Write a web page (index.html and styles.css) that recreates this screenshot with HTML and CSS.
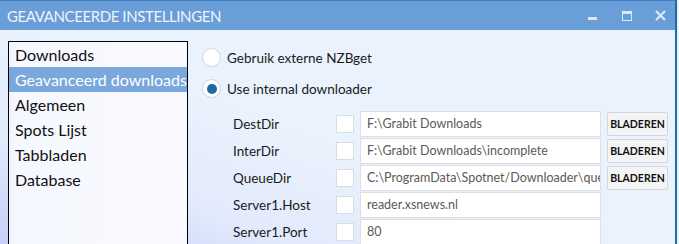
FILE: index.html
```html
<!DOCTYPE html>
<html lang="nl">
<head>
  <meta charset="UTF-8">
  <title>Geavanceerde instellingen</title>
  <link rel="stylesheet" href="styles.css">
</head>
<body>

  <div class="window">
    <div class="titlebar">
      <span class="title">GEAVANCEERDE INSTELLINGEN</span>
      <div class="controls">
        <span class="ctl ctl-min"></span>
        <span class="ctl ctl-max"></span>
        <svg class="ctl-close" width="11" height="11" viewBox="0 0 11 11">
          <path d="M1 1 L10 10 M10 1 L1 10" stroke="#dce8f6" stroke-width="2.2"/>
        </svg>
      </div>
    </div>

    <div class="content">
      <ul class="nav-list">
        <li>Downloads</li>
        <li class="selected">Geavanceerd downloads</li>
        <li>Algemeen</li>
        <li>Spots Lijst</li>
        <li>Tabbladen</li>
        <li>Database</li>
      </ul>

      <div class="settings">
        <label class="radio-row">
          <span class="radio"></span>
          Gebruik externe NZBget
        </label>
        <label class="radio-row">
          <span class="radio checked"></span>
          Use internal downloader
        </label>

        <div class="fields">
          <span class="field-label">DestDir</span>
          <span class="check"></span>
          <div class="field-input">F:\Grabit Downloads</div>
          <button class="browse">BLADEREN</button>

          <span class="field-label">InterDir</span>
          <span class="check"></span>
          <div class="field-input">F:\Grabit Downloads\incomplete</div>
          <button class="browse">BLADEREN</button>

          <span class="field-label">QueueDir</span>
          <span class="check"></span>
          <div class="field-input">C:\ProgramData\Spotnet/Downloader\queue</div>
          <button class="browse">BLADEREN</button>

          <span class="field-label">Server1.Host</span>
          <span class="check"></span>
          <div class="field-input">reader.xsnews.nl</div>
          <span></span>

          <span class="field-label">Server1.Port</span>
          <span class="check"></span>
          <div class="field-input">80</div>
          <span></span>
        </div>
      </div>
    </div>
  </div>

</body>
</html>
```

FILE: styles.css
```css
* {
  margin: 0;
  padding: 0;
  box-sizing: border-box;
  font-family: 'Lato', 'Noto Sans', sans-serif;
}

body {
  width: 679px;
  height: 244px;
  overflow: hidden;
  background: #e9f1fc;
}

.window {
  width: 677px;
  height: 244px;
  overflow: hidden;
  border-right: 2px solid #1d6ca6;
  display: flex;
  flex-direction: column;
  background: linear-gradient(20deg, #c6cff8 0%, #e2eafc 22%, #eaf2fd 45%);
}

/* Title bar */
.titlebar {
  height: 30px;
  flex-shrink: 0;
  background: #699ed8;
  border-top: 1px solid #3f7fc2;
  display: flex;
  align-items: center;
  justify-content: space-between;
  padding-left: 7px;
}

.title {
  color: #eef4fc;
  font-size: 15px;
  letter-spacing: -0.4px;
}

.controls {
  display: flex;
  align-items: center;
  height: 100%;
}

.ctl {
  display: block;
  background: #dce8f6;
}

.ctl-min {
  width: 9px;
  height: 3px;
  margin-top: 6px;
  margin-right: 25px;
}

.ctl-max {
  width: 10px;
  height: 10px;
  background: transparent;
  border: 1px solid #dce8f6;
  border-top-width: 3px;
  margin-right: 23px;
}

.ctl-close {
  display: block;
  margin-right: 9px;
}

/* Content */
.content {
  flex: 1;
  display: flex;
  padding-left: 8px;
  min-height: 0;
}

.nav-list {
  list-style: none;
  width: 180px;
  flex-shrink: 0;
  margin-top: 11px;
  border: 1px solid #000;
  border-bottom: none;
  background: linear-gradient(90deg, #eef1fd 0%, #f6f8ff 3%, #f8faff 100%);
  overflow: hidden;
}

.nav-list li {
  height: 25px;
  line-height: 25px;
  padding-left: 6px;
  font-size: 16px;
  color: #111;
  white-space: nowrap;
}

.nav-list li.selected {
  background: #7aa7dc;
  color: #fff;
}

/* Settings panel */
.settings {
  flex: 1;
  padding: 18px 0 0 14px;
}

.radio-row {
  display: flex;
  align-items: center;
  height: 19px;
  font-size: 13.5px;
  color: #1a1a1a;
  margin-bottom: 12px;
}

.radio {
  width: 19px;
  height: 19px;
  border-radius: 50%;
  border: 1px solid #cfd6de;
  background: #fff;
  margin-right: 6px;
  display: flex;
  align-items: center;
  justify-content: center;
}

.radio.checked::after {
  content: '';
  width: 10px;
  height: 10px;
  border-radius: 50%;
  background: #1b6aa4;
}

.fields {
  display: grid;
  grid-template-columns: 97px 18px 241px 61px;
  column-gap: 6px;
  row-gap: 1px;
  margin-top: 13px;
  margin-left: 31px;
  align-items: center;
}

.field-label {
  font-size: 13.5px;
  color: #1a1a1a;
}

.check {
  width: 18px;
  height: 18px;
  border: 1px solid #d8dde3;
  background: #fff;
}

.field-input {
  height: 26px;
  line-height: 24px;
  border: 1px solid #dcdfe3;
  background: #fff;
  padding-left: 6px;
  font-size: 12.5px;
  color: #5a5a5a;
  white-space: nowrap;
  overflow: hidden;
}

.browse {
  height: 24px;
  padding: 0;
  border: 1px solid #d3d6da;
  border-radius: 2px;
  background: #f4f4f4;
  font-size: 10.5px;
  font-weight: 700;
  color: #111;
}
```
